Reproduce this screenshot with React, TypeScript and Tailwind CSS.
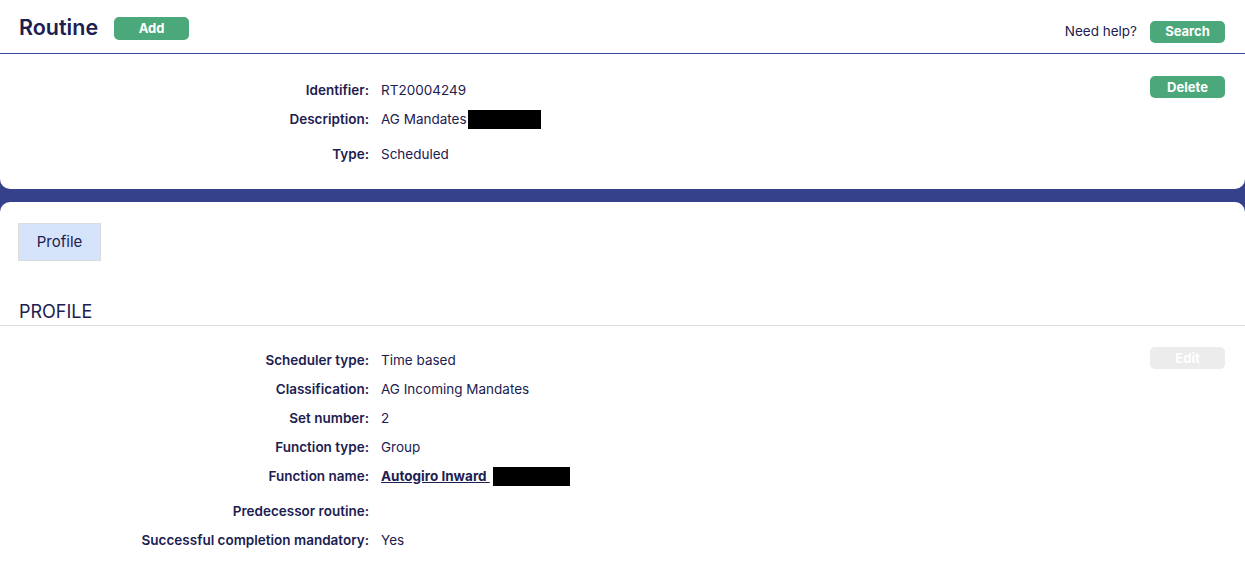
import React from "react";

type Row = { label: string; value?: React.ReactNode; extra?: boolean };

function FieldRows({ rows }: { rows: Row[] }) {
  return (
    <div className="flex flex-col">
      {rows.map((r) => (
        <div
          key={r.label}
          className={`grid grid-cols-[369px_1fr] gap-x-[12px] h-[29px] items-center ${r.extra ? "mb-[6px]" : ""}`}
        >
          <span className="text-right font-semibold whitespace-nowrap">{r.label}</span>
          <span className="flex items-center whitespace-nowrap">{r.value}</span>
        </div>
      ))}
    </div>
  );
}

function Btn({ children, disabled }: { children: React.ReactNode; disabled?: boolean }) {
  return (
    <button
      className={`w-[75px] h-[22px] rounded-[5px] text-[13px] font-bold leading-none text-white ${
        disabled ? "bg-[#ececec]" : "bg-[#4aa87a]"
      }`}
    >
      {children}
    </button>
  );
}

const Redacted = ({ w }: { w: string }) => <span className={`inline-block bg-black h-[19px] ${w}`} />;

export default function App() {
  const topRows: Row[] = [
    { label: "Identifier:", value: "RT20004249" },
    {
      label: "Description:",
      value: (
        <>
          AG Mandates <Redacted w="w-[73px] ml-[1px]" />
        </>
      ),
      extra: true,
    },
    { label: "Type:", value: "Scheduled" },
  ];

  const profileRows: Row[] = [
    { label: "Scheduler type:", value: "Time based" },
    { label: "Classification:", value: "AG Incoming Mandates" },
    { label: "Set number:", value: "2" },
    { label: "Function type:", value: "Group" },
    {
      label: "Function name:",
      value: (
        <>
          <a className="font-bold underline whitespace-pre">Autogiro Inward </a>
          <Redacted w="w-[77px] ml-[3px]" />
        </>
      ),
      extra: true,
    },
    { label: "Predecessor routine:", value: "" },
    { label: "Successful completion mandatory:", value: "Yes" },
  ];

  return (
    <div
      className="min-h-screen bg-[#36418b] text-[13.5px] text-[#1c2050]"
      style={{ fontFamily: "Inter, 'Liberation Sans', sans-serif" }}
    >
      <div className="bg-white rounded-b-[10px]">
        <header className="flex items-center h-[54px] border-b border-[#3a45a0] pl-[19px] pr-[20px]">
          <h1 className="text-[21.5px] font-semibold mt-[2px]">Routine</h1>
          <div className="ml-[16px] mt-[3px]">
            <button className="w-[75px] h-[23px] rounded-[5px] text-[13px] font-bold text-white bg-[#4aa87a] leading-none">
              Add
            </button>
          </div>
          <div className="ml-auto flex items-center gap-[13px] mt-[10px]">
            <span>Need help?</span>
            <Btn>Search</Btn>
          </div>
        </header>
        <section className="flex justify-between pt-[22px] pb-[20px] pr-[20px]">
          <FieldRows rows={topRows} />
          <div>
            <Btn>Delete</Btn>
          </div>
        </section>
      </div>

      <div className="mt-[13px] bg-white rounded-t-[10px] min-h-[366px]">
        <div className="pt-[21px] pl-[18px]">
          <div className="w-[83px] h-[38px] flex items-center justify-center bg-[#d6e4fb] border border-[#dcdcdc] text-[15px]">
            Profile
          </div>
        </div>
        <h2 className="mt-[39px] pl-[19px] text-[18px] leading-[24px] uppercase pb-[1px] border-b border-[#dedede]">
          Profile
        </h2>
        <section className="flex justify-between pt-[20px] pr-[20px]">
          <FieldRows rows={profileRows} />
          <div className="pt-[1px]">
            <Btn disabled>Edit</Btn>
          </div>
        </section>
      </div>
    </div>
  );
}
